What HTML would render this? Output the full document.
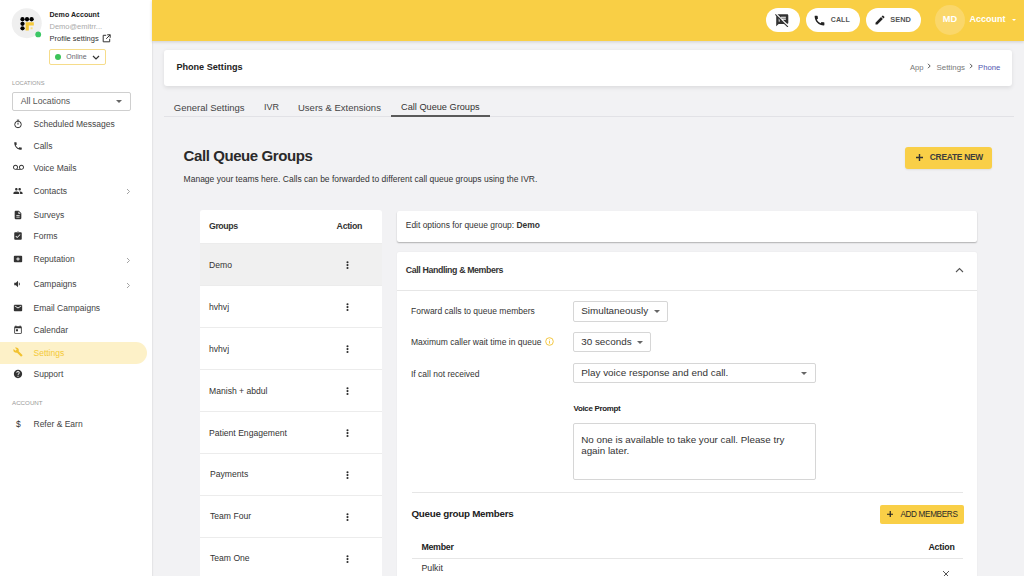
<!DOCTYPE html>
<html><head><meta charset="utf-8">
<style>
*{box-sizing:border-box;margin:0;padding:0}
html,body{width:1024px;height:576px;overflow:hidden;background:#f2f2f4;font-family:"Liberation Sans",sans-serif;color:#333}
.a{position:absolute;white-space:nowrap}
.t{position:absolute;white-space:nowrap}
#side{position:absolute;left:0;top:0;width:152px;height:576px;background:#fff;box-shadow:1px 0 1px rgba(0,0,0,.05)}
#top{position:absolute;left:152px;top:0;width:872px;height:41px;background:#f9cf45;box-shadow:0 1px 3px rgba(0,0,0,.15)}
.mi{position:absolute;left:33.5px;font-size:8.5px;line-height:10px;color:#444}
.ic{position:absolute;left:12px;width:11px;height:11px}
.card{position:absolute;background:#fff;border-radius:3px}
.pill{position:absolute;top:8px;height:24px;background:#fff;border-radius:12px}
.sel{position:absolute;left:573px;height:20px;border:1px solid #d6d6d6;border-radius:2px;background:#fff}
.caret{position:absolute;width:0;height:0;border-left:3px solid transparent;border-right:3px solid transparent;border-top:3px solid #666}
.row{position:absolute;left:200px;width:182px;height:42px;border-top:1px solid #ececec;background:#fff}
.row span{position:absolute;left:9px;top:16px;font-size:8.6px;line-height:10px;color:#333}
.dots{position:absolute;left:146px;top:17px}
.dots i{display:block;width:1.9px;height:1.9px;background:#2a2a2a;border-radius:.5px;margin-bottom:.75px}
.lbl{position:absolute;left:411px;font-size:8.5px;line-height:10px;color:#333}
</style></head><body>

<!-- Sidebar -->
<div id="side">
  <svg class="a" style="left:0;top:0" width="48" height="44" viewBox="0 0 48 44">
    <circle cx="26.75" cy="23.2" r="15" fill="#efefef"/>
    <circle cx="22.5" cy="19.25" r="2.15" fill="#000"/><circle cx="27" cy="19.25" r="2.15" fill="#000"/><circle cx="31.6" cy="19.25" r="2.15" fill="#000"/>
    <circle cx="22.5" cy="23.8" r="2.15" fill="#000"/><circle cx="22.5" cy="28.3" r="2.15" fill="#000"/>
    <path d="M25.6 22.2h8.2v3.4h-5v5h-3.2z" fill="#f5c93a"/><rect x="30.6" y="27.3" width="2" height="2" fill="#f8dc7e"/>
    <circle cx="38.2" cy="34.4" r="2.9" fill="#3cc766"/>
  </svg>
  <div class="t" style="left:49.5px;top:11.3px;font-size:7.1px;line-height:9px;font-weight:700;color:#222">Demo Account</div>
  <div class="t" style="left:49.5px;top:22px;font-size:7.5px;line-height:9px;color:#aaa">Demo@emitrr...</div>
  <div class="t" style="left:49.5px;top:33.5px;font-size:7.5px;line-height:9px;color:#333">Profile settings</div>
  <svg class="a" style="left:102px;top:33.5px" width="9" height="9" viewBox="0 0 9 9"><path d="M4.2 1.3H1.2v6.5h6.5V4.8" fill="none" stroke="#333" stroke-width="1"/><path d="M5.2 .8h3v3M8.2 .8L4.2 4.8" fill="none" stroke="#333" stroke-width="1"/></svg>
  <div class="a" style="left:49px;top:49px;width:57px;height:16px;border:1px solid #f6dc8a;border-radius:2px;background:#fff"></div>
  <div class="a" style="left:55px;top:54px;width:6px;height:6px;border-radius:50%;background:#3cc35a"></div>
  <div class="t" style="left:66.3px;top:51.8px;font-size:7px;line-height:9px;color:#666670">Online</div>
  <svg class="a" style="left:92px;top:54.5px" width="8" height="5" viewBox="0 0 8 5"><path d="M1 1l3 3L7 1" fill="none" stroke="#333" stroke-width="1.2"/></svg>

  <div class="t" style="left:12px;top:80px;font-size:5.7px;line-height:7px;color:#999">LOCATIONS</div>
  <div class="a" style="left:12px;top:92px;width:119px;height:19px;border:1px solid #cfcfcf;border-radius:2px"></div>
  <div class="t" style="left:20.8px;top:96px;font-size:8.7px;line-height:11px;color:#555">All Locations</div>
  <div class="caret" style="left:116px;top:100px;border-top-color:#666;border-left-width:3.5px;border-right-width:3.5px;border-top-width:3.5px"></div>

  <div class="mi" style="top:119px">Scheduled Messages</div>
  <div class="mi" style="top:141px">Calls</div>
  <div class="mi" style="top:163px">Voice Mails</div>
  <div class="mi" style="top:186px">Contacts</div>
  <div class="mi" style="top:210px">Surveys</div>
  <div class="mi" style="top:231px">Forms</div>
  <div class="mi" style="top:254px">Reputation</div>
  <div class="mi" style="top:279px">Campaigns</div>
  <div class="mi" style="top:303px">Email Campaigns</div>
  <div class="mi" style="top:325px">Calendar</div>
  <div class="a" style="left:0;top:342px;width:147px;height:22px;background:#fdf1c8;border-radius:0 11px 11px 0"></div>
  <div class="mi" style="top:347.5px;color:#f4c936">Settings</div>
  <div class="mi" style="top:369px">Support</div>
  <div class="t" style="left:12px;top:398.7px;font-size:6.2px;line-height:7px;color:#999">ACCOUNT</div>
  <div class="mi" style="top:419px">Refer &amp; Earn</div>
  <svg class="a" style="left:126px;top:188px" width="5" height="7" viewBox="0 0 5 7"><path d="M1 1l2.5 2.5L1 6" fill="none" stroke="#999" stroke-width="0.9"/></svg>
  <svg class="a" style="left:126px;top:257px" width="5" height="7" viewBox="0 0 5 7"><path d="M1 1l2.5 2.5L1 6" fill="none" stroke="#999" stroke-width="0.9"/></svg>
  <svg class="a" style="left:126px;top:282px" width="5" height="7" viewBox="0 0 5 7"><path d="M1 1l2.5 2.5L1 6" fill="none" stroke="#999" stroke-width="0.9"/></svg>

  <!-- icons -->
  <svg class="a" style="left:13px;top:118.5px" width="10" height="10" viewBox="0 0 11 11"><circle cx="5.5" cy="6" r="3.6" fill="none" stroke="#333" stroke-width="1.1"/><path d="M5.5 4v2.2M4.2 1.3h2.6" stroke="#333" stroke-width="1.1"/></svg>
  <svg class="a" style="left:13px;top:140.5px" width="10" height="10" viewBox="0 0 24 24"><path fill="#333" d="M6.6 10.8c1.4 2.8 3.8 5.1 6.6 6.6l2.2-2.2c.3-.3.7-.4 1-.2 1.1.4 2.3.6 3.6.6.6 0 1 .4 1 1V20c0 .6-.4 1-1 1C10.6 21 3 13.4 3 4c0-.6.4-1 1-1h3.5c.6 0 1 .4 1 1 0 1.3.2 2.5.6 3.6.1.3 0 .7-.2 1L6.6 10.8z"/></svg>
  <svg class="a" style="left:12.5px;top:162px" width="11" height="11" viewBox="0 0 24 24"><path fill="#333" d="M18.5 6C15.46 6 13 8.46 13 11.5c0 1.33.47 2.55 1.26 3.5H9.74c.79-.95 1.26-2.17 1.26-3.5C11 8.46 8.54 6 5.5 6S0 8.46 0 11.5 2.46 17 5.5 17h13c3.04 0 5.5-2.46 5.5-5.5S21.54 6 18.5 6zm-13 9C3.57 15 2 13.430 2 11.5S3.57 8 5.5 8 9 9.57 9 11.5 7.43 15 5.5 15zm13 0c-1.93 0-3.5-1.57-3.5-3.5S16.57 8 18.5 8 22 9.57 22 11.5 20.43 15 18.5 15z"/></svg>
  <svg class="a" style="left:13px;top:185.5px" width="10" height="10" viewBox="0 0 24 24"><path fill="#333" d="M16 11c1.7 0 3-1.3 3-3s-1.3-3-3-3-3 1.3-3 3 1.3 3 3 3zm-8 0c1.7 0 3-1.3 3-3S9.7 5 8 5 5 6.3 5 8s1.3 3 3 3zm0 2c-2.3 0-7 1.2-7 3.5V19h14v-2.5C15 14.2 10.3 13 8 13zm8 0c-.3 0-.6 0-1 .1 1.2.8 2 2 2 3.4V19h6v-2.5c0-2.3-4.7-3.5-7-3.5z"/></svg>
  <svg class="a" style="left:13px;top:209.5px" width="10" height="10" viewBox="0 0 24 24"><path fill="#333" d="M14 2H6c-1.1 0-2 .9-2 2v16c0 1.1.9 2 2 2h12c1.1 0 2-.9 2-2V8l-6-6zm2 16H8v-2h8v2zm0-4H8v-2h8v2zm-3-5V3.5L18.5 9H13z"/></svg>
  <svg class="a" style="left:13px;top:230.5px" width="10" height="10" viewBox="0 0 24 24"><path fill="#333" d="M19 3h-4.2C14.4 1.8 13.3 1 12 1s-2.4.8-2.8 2H5c-1.1 0-2 .9-2 2v14c0 1.1.9 2 2 2h14c1.1 0 2-.9 2-2V5c0-1.1-.9-2-2-2zm-7 0c.6 0 1 .4 1 1s-.4 1-1 1-1-.4-1-1 .4-1 1-1zm-2 14l-4-4 1.4-1.4 2.6 2.6 6.6-6.6L18 9l-8 8z"/></svg>
  <svg class="a" style="left:13px;top:253.5px" width="10" height="10" viewBox="0 0 24 24"><path fill="#333" d="M20 4H4c-1.1 0-2 .9-2 2v12c0 1.1.9 2 2 2h16c1.1 0 2-.9 2-2V6c0-1.1-.9-2-2-2zm-4 9h-3v3h-2v-3H8v-2h3V8h2v3h3v2z"/></svg>
  <svg class="a" style="left:13px;top:278.5px" width="10" height="10" viewBox="0 0 24 24"><path fill="#333" d="M3 9v6h4l5 5V4L7 9H3zm13.5 3c0-1.8-1-3.3-2.5-4v8c1.5-.7 2.5-2.2 2.5-4z"/></svg>
  <svg class="a" style="left:13px;top:302.5px" width="10" height="10" viewBox="0 0 24 24"><path fill="#333" d="M20 4H4c-1.1 0-2 .9-2 2v12c0 1.1.9 2 2 2h16c1.1 0 2-.9 2-2V6c0-1.1-.9-2-2-2zm0 4l-8 5-8-5V6l8 5 8-5v2z"/></svg>
  <svg class="a" style="left:13px;top:324.5px" width="10" height="10" viewBox="0 0 24 24"><path fill="#333" d="M19 3h-1V1h-2v2H8V1H6v2H5c-1.1 0-2 .9-2 2v14c0 1.1.9 2 2 2h14c1.1 0 2-.9 2-2V5c0-1.1-.9-2-2-2zm0 16H5V8h14v11zM7 10h5v5H7z"/></svg>
  <svg class="a" style="left:13px;top:346.5px" width="10" height="10" viewBox="0 0 24 24"><path fill="#f2c230" d="M22.7 19l-9.1-9.1c.9-2.3.4-5-1.5-6.9-2-2-5-2.4-7.4-1.3L9 6 6 9 1.6 4.7C.4 7.1.9 10.1 2.9 12.1c1.9 1.9 4.6 2.4 6.9 1.5l9.1 9.1c.4.4 1 .4 1.4 0l2.3-2.3c.5-.4.5-1.1.1-1.4z"/></svg>
  <svg class="a" style="left:13px;top:368.5px" width="10" height="10" viewBox="0 0 24 24"><path fill="#333" d="M12 2C6.5 2 2 6.5 2 12s4.5 10 10 10 10-4.5 10-10S17.5 2 12 2zm1 17h-2v-2h2v2zm2.1-7.8l-.9.9c-.7.7-1.2 1.3-1.2 2.9h-2v-.5c0-1.1.4-2.1 1.2-2.8l1.2-1.3c.4-.4.6-.9.6-1.4 0-1.1-.9-2-2-2s-2 .9-2 2H8c0-2.2 1.8-4 4-4s4 1.8 4 4c0 .9-.4 1.7-.9 2.2z"/></svg>
  <div class="t" style="left:16px;top:419px;font-size:8.5px;line-height:10px;color:#333">$</div>
</div>

<!-- Top bar -->
<div id="top"></div>
<div class="pill" style="left:766px;width:34px"></div>
<svg class="a" style="left:775px;top:12.5px" width="14.5" height="14.5" viewBox="0 0 24 24"><path fill="#333" d="M10.54 11l-.54-.54L7.54 8 6 6.46 2.38 2.84 1.27 1.73 0 3l2.01 2.01L2 22l4-4h9l5.73 5.73L22 22.46 17.54 18l-7-7zM8 14H6v-2h2v2zm-2-3V9l2 2H6zm14-9H4.08L10 7.92V6h8v2h-7.92l1 1H18v2h-4.92l6.99 6.99C21.14 17.95 22 17.08 22 16V4c0-1.1-.9-2-2-2z"/></svg>
<div class="pill" style="left:806px;width:54px"></div>
<svg class="a" style="left:813.3px;top:14.1px" width="13" height="13" viewBox="0 0 24 24"><path fill="#222" d="M20.01 15.38c-1.23 0-2.42-.2-3.530-.56-.35-.12-.74-.03-1.01.24l-1.57 1.97c-2.830-1.350-5.480-3.900-6.890-6.830l1.95-1.66c.27-.28.35-.67.24-1.02-.37-1.11-.56-2.3-.56-3.53 0-.54-.45-.99-.99-.99H4.19C3.65 3 3 3.24 3 3.99 3 13.28 10.73 21 20.01 21c.71 0 .99-.63.99-1.18v-3.45c0-.54-.45-.99-.99-.99z"/></svg>
<div class="t" style="left:830.8px;top:15px;font-size:7px;line-height:9px;font-weight:700;color:#555;letter-spacing:.1px">CALL</div>
<div class="pill" style="left:866px;width:55px"></div>
<svg class="a" style="left:873.5px;top:13.7px" width="12" height="12" viewBox="0 0 24 24"><path fill="#222" d="M3 17.25V21h3.75L17.81 9.94l-3.75-3.75L3 17.25zM20.71 7.04c.39-.39.39-1.020 0-1.41l-2.34-2.34c-.39-.39-1.02-.39-1.41 0l-1.83 1.83 3.75 3.75 1.83-1.83z"/></svg>
<div class="t" style="left:890.3px;top:15px;font-size:7.4px;line-height:9px;font-weight:700;color:#555">SEND</div>
<div class="a" style="left:935px;top:5px;width:30px;height:30px;border-radius:50%;background:#fad76a"></div>
<div class="t" style="left:942.8px;top:14px;font-size:9.2px;line-height:11px;font-weight:700;color:#fff">MD</div>
<div class="t" style="left:969.4px;top:14px;font-size:9px;line-height:11px;font-weight:700;color:#fff">Account</div>
<div class="caret" style="left:1012px;top:19px;border-top-color:#fff;border-left-width:2.5px;border-right-width:2.5px;border-top-width:2.5px"></div>

<!-- Phone settings card -->
<div class="card" style="left:164px;top:50px;width:848px;height:36px;box-shadow:0 1.5px 4px rgba(0,0,0,.09)"></div>
<div class="t" style="left:176.4px;top:62px;font-size:9.1px;line-height:11px;font-weight:700;color:#222">Phone Settings</div>
<div class="t" style="left:910px;top:62.5px;font-size:7.6px;line-height:9px;color:#777">App</div>
<svg class="a" style="left:927px;top:62.7px" width="5" height="6" viewBox="0 0 5 6"><path d="M1 .8l2.2 2.2L1 5.2" fill="none" stroke="#555" stroke-width="1"/></svg>
<div class="t" style="left:936.5px;top:62.5px;font-size:7.9px;line-height:9px;color:#777">Settings</div>
<svg class="a" style="left:969px;top:62.7px" width="5" height="6" viewBox="0 0 5 6"><path d="M1 .8l2.2 2.2L1 5.2" fill="none" stroke="#555" stroke-width="1"/></svg>
<div class="t" style="left:978px;top:62.5px;font-size:7.7px;line-height:9px;color:#5055b0">Phone</div>

<!-- Tabs -->
<div class="a" style="left:164px;top:116px;width:850px;height:1px;background:#e2e2e6"></div>
<div class="t" style="left:173.8px;top:101.5px;font-size:9.5px;line-height:11px;color:#444">General Settings</div>
<div class="t" style="left:264px;top:102px;font-size:9px;line-height:11px;color:#444">IVR</div>
<div class="t" style="left:298px;top:101.5px;font-size:9.5px;line-height:11px;color:#444">Users &amp; Extensions</div>
<div class="t" style="left:401px;top:102px;font-size:9.2px;line-height:11px;color:#333">Call Queue Groups</div>
<div class="a" style="left:391px;top:115px;width:99px;height:1.6px;background:#5a5a5a"></div>

<!-- Title -->
<div class="t" style="left:183.6px;top:146.6px;font-size:15px;letter-spacing:-0.42px;line-height:17px;font-weight:700;color:#2a2a2a">Call Queue Groups</div>
<div class="t" style="left:183.6px;top:174px;font-size:8.5px;line-height:10px;color:#333">Manage your teams here. Calls can be forwarded to different call queue groups using the IVR.</div>

<div class="a" style="left:905.3px;top:146.5px;width:87px;height:22px;background:#f9cf47;border-radius:3px;box-shadow:0 1px 2px rgba(0,0,0,.08)"></div>
<svg class="a" style="left:915.5px;top:154px" width="7" height="7" viewBox="0 0 7 7"><path d="M3.5 0v7M0 3.5h7" stroke="#333" stroke-width="1.4"/></svg>
<div class="t" style="left:929.8px;top:152.2px;font-size:8.4px;letter-spacing:-0.25px;line-height:10px;font-weight:700;color:#3d3d3d">CREATE NEW</div>

<!-- Groups list -->
<div class="card" style="left:200px;top:210px;width:182px;height:33px;border-radius:3px 3px 0 0"></div>
<div class="t" style="left:209px;top:220.5px;font-size:8.8px;letter-spacing:-0.45px;line-height:10px;font-weight:700;color:#333">Groups</div>
<div class="t" style="left:336.6px;top:220.5px;font-size:8.8px;letter-spacing:-0.3px;line-height:10px;font-weight:700;color:#333">Action</div>
<div class="row" style="top:243px;background:#f0f0f0"><span>Demo</span><svg class="dots" width="3" height="9" viewBox="0 0 3 9"><circle cx="1.5" cy="1.2" r="1.05" fill="#2a2a2a"/><circle cx="1.5" cy="4.1" r="1.05" fill="#2a2a2a"/><circle cx="1.5" cy="7" r="1.05" fill="#2a2a2a"/></svg></div>
<div class="row" style="top:285px"><span>hvhvj</span><svg class="dots" width="3" height="9" viewBox="0 0 3 9"><circle cx="1.5" cy="1.2" r="1.05" fill="#2a2a2a"/><circle cx="1.5" cy="4.1" r="1.05" fill="#2a2a2a"/><circle cx="1.5" cy="7" r="1.05" fill="#2a2a2a"/></svg></div>
<div class="row" style="top:327px"><span>hvhvj</span><svg class="dots" width="3" height="9" viewBox="0 0 3 9"><circle cx="1.5" cy="1.2" r="1.05" fill="#2a2a2a"/><circle cx="1.5" cy="4.1" r="1.05" fill="#2a2a2a"/><circle cx="1.5" cy="7" r="1.05" fill="#2a2a2a"/></svg></div>
<div class="row" style="top:369px"><span>Manish + abdul</span><svg class="dots" width="3" height="9" viewBox="0 0 3 9"><circle cx="1.5" cy="1.2" r="1.05" fill="#2a2a2a"/><circle cx="1.5" cy="4.1" r="1.05" fill="#2a2a2a"/><circle cx="1.5" cy="7" r="1.05" fill="#2a2a2a"/></svg></div>
<div class="row" style="top:411px"><span>Patient Engagement</span><svg class="dots" width="3" height="9" viewBox="0 0 3 9"><circle cx="1.5" cy="1.2" r="1.05" fill="#2a2a2a"/><circle cx="1.5" cy="4.1" r="1.05" fill="#2a2a2a"/><circle cx="1.5" cy="7" r="1.05" fill="#2a2a2a"/></svg></div>
<div class="row" style="top:453px"><span style="left:10px;top:15.2px">Payments</span><svg class="dots" width="3" height="9" viewBox="0 0 3 9"><circle cx="1.5" cy="1.2" r="1.05" fill="#2a2a2a"/><circle cx="1.5" cy="4.1" r="1.05" fill="#2a2a2a"/><circle cx="1.5" cy="7" r="1.05" fill="#2a2a2a"/></svg></div>
<div class="row" style="top:495px"><span style="left:10px;top:15.2px">Team Four</span><svg class="dots" width="3" height="9" viewBox="0 0 3 9"><circle cx="1.5" cy="1.2" r="1.05" fill="#2a2a2a"/><circle cx="1.5" cy="4.1" r="1.05" fill="#2a2a2a"/><circle cx="1.5" cy="7" r="1.05" fill="#2a2a2a"/></svg></div>
<div class="row" style="top:537px"><span style="left:10px;top:15.2px">Team One</span><svg class="dots" width="3" height="9" viewBox="0 0 3 9"><circle cx="1.5" cy="1.2" r="1.05" fill="#2a2a2a"/><circle cx="1.5" cy="4.1" r="1.05" fill="#2a2a2a"/><circle cx="1.5" cy="7" r="1.05" fill="#2a2a2a"/></svg></div>

<!-- Edit options -->
<div class="card" style="left:397px;top:211px;width:580px;height:30.5px;border-radius:2px;box-shadow:0 1px 1.5px rgba(0,0,0,.28)"></div>
<div class="t" style="left:405.8px;top:220px;font-size:8.45px;line-height:10px;color:#333">Edit options for queue group: <b>Demo</b></div>

<!-- Call handling -->
<div class="card" style="left:397px;top:252px;width:580px;height:330px;border-radius:2px 2px 0 0;box-shadow:0 0 2px rgba(0,0,0,.06)"></div>
<div class="a" style="left:397px;top:290px;width:580px;height:1px;background:#e6e6e6"></div>
<div class="t" style="left:405.8px;top:265px;font-size:8.8px;letter-spacing:-0.38px;line-height:10px;font-weight:700;color:#333">Call Handling &amp; Members</div>
<svg class="a" style="left:955px;top:267px" width="9" height="6" viewBox="0 0 9 6"><path d="M1 5l3.5-3.5L8 5" fill="none" stroke="#555" stroke-width="1.1"/></svg>

<div class="lbl" style="top:306px">Forward calls to queue members</div>
<div class="lbl" style="top:337px">Maximum caller wait time in queue</div>
<svg class="a" style="left:545px;top:337px" width="9" height="9" viewBox="0 0 9 9"><circle cx="4.5" cy="4.5" r="3.8" fill="none" stroke="#f2c230" stroke-width=".9"/><path d="M4.5 4v2.6M4.5 2.5v.8" stroke="#f2c230" stroke-width=".9"/></svg>
<div class="lbl" style="top:368.5px">If call not received</div>

<div class="sel" style="top:301.3px;width:95px;height:20.5px"></div>
<div class="t" style="left:581.2px;top:305px;font-size:9.9px;line-height:11px;color:#333">Simultaneously</div>
<div class="caret" style="left:654px;top:310px"></div>
<div class="sel" style="top:332px;width:78px"></div>
<div class="t" style="left:581.2px;top:335.5px;font-size:9.9px;line-height:11px;color:#333">30 seconds</div>
<div class="caret" style="left:637px;top:341px"></div>
<div class="sel" style="top:363px;width:243px"></div>
<div class="t" style="left:581.2px;top:367px;font-size:9.9px;line-height:11px;color:#333">Play voice response and end call.</div>
<div class="caret" style="left:801px;top:372px"></div>

<div class="t" style="left:573.5px;top:403.8px;font-size:7.9px;letter-spacing:-0.28px;line-height:9px;font-weight:700;color:#222">Voice Prompt</div>
<div class="a" style="left:573px;top:423px;width:243px;height:57px;border:1px solid #d6d6d6;border-radius:2px"></div>
<div class="t" style="left:581.2px;top:433.5px;font-size:9.8px;line-height:11px;color:#333;white-space:normal;width:230px">No one is available to take your call. Please try<br>again later.</div>

<div class="a" style="left:412px;top:492px;width:551px;height:1px;background:#e6e6e6"></div>
<div class="t" style="left:411.5px;top:508px;font-size:9.8px;letter-spacing:-0.25px;line-height:11px;font-weight:700;color:#222">Queue group Members</div>
<div class="a" style="left:880px;top:505px;width:84px;height:19px;background:#f9cf47;border-radius:2px"></div>
<svg class="a" style="left:886.5px;top:510.8px" width="6.5" height="6.5" viewBox="0 0 6.5 6.5"><path d="M3.25 0v6.5M0 3.25h6.5" stroke="#222" stroke-width="1.2"/></svg>
<div class="t" style="left:900.4px;top:510px;font-size:8.2px;letter-spacing:-0.35px;line-height:9px;color:#2a2a2a">ADD MEMBERS</div>

<div class="t" style="left:421.4px;top:542px;font-size:8.8px;letter-spacing:-0.25px;line-height:10px;font-weight:700;color:#222">Member</div>
<div class="t" style="left:928.4px;top:542px;font-size:8.8px;letter-spacing:-0.2px;line-height:10px;font-weight:700;color:#222">Action</div>
<div class="a" style="left:412px;top:558px;width:551px;height:1px;background:#e6e6e6"></div>
<div class="t" style="left:421.4px;top:563px;font-size:8.8px;line-height:10px;color:#333">Pulkit</div>
<svg class="a" style="left:942px;top:570px" width="8" height="8" viewBox="0 0 8 8"><path d="M1 1l6 6M7 1L1 7" stroke="#555" stroke-width="1"/></svg>

</body></html>
